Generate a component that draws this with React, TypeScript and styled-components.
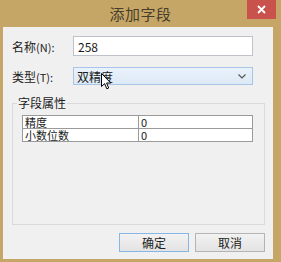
import styled, { createGlobalStyle } from 'styled-components';

const GlobalStyle = createGlobalStyle`
  html, body {
    margin: 0;
    padding: 0;
    background: #c6a666;
  }
  body {
    font-family: 'Noto Sans CJK SC', 'Noto Sans', sans-serif;
    font-size: 12px;
    color: #1a1a1a;
  }
`;

const Frame = styled.div`
  width: 281px;
  height: 262px;
  box-sizing: border-box;
  padding: 0 8px 3px 3px;
  background: #c6a666;
  display: flex;
  flex-direction: column;
`;

const TitleBar = styled.div`
  height: 27px;
  margin: 0 -8px 0 -3px;
  display: grid;
  grid-template-columns: 1fr auto 1fr;
  align-items: center;
`;

const Title = styled.div`
  grid-column: 2;
  font-size: 15px;
  color: #463d2b;
  line-height: 27px;
  letter-spacing: 0.5px;
`;

const CloseButton = styled.div`
  grid-column: 3;
  justify-self: end;
  align-self: start;
  margin-right: 5px;
  width: 29px;
  height: 19px;
  background: #c9534c;
  display: flex;
  align-items: center;
  justify-content: center;
`;

const Client = styled.div`
  flex: 1;
  background: #f0f0f0;
  padding: 9px 8px 0 9px;
  display: flex;
  flex-direction: column;
`;

const FieldRow = styled.div<{ $gap?: number }>`
  display: flex;
  align-items: center;
  margin-top: ${(p) => p.$gap ?? 0}px;
`;

const Label = styled.div`
  width: 61px;
  font-size: 12px;
  color: #222;

  small {
    font-size: 11px;
  }
`;

const TextInput = styled.div`
  width: 180px;
  height: 20px;
  box-sizing: border-box;
  border: 1px solid #bfc2c8;
  background: #fff;
  padding-left: 4px;
  display: flex;
  align-items: center;
  font-size: 12px;
`;

const Combo = styled.div`
  position: relative;
  width: 180px;
  height: 18px;
  box-sizing: border-box;
  border: 1px solid #a9c5e6;
  background: linear-gradient(#eaf2fb, #dde9f6);
  padding: 0 6px 0 3px;
  display: flex;
  align-items: center;
  justify-content: space-between;
  font-size: 12px;
`;

const Cursor = styled.svg`
  position: absolute;
  left: 27px;
  top: 5px;
`;

const Group = styled.fieldset`
  margin: 12px 0 0 0;
  height: 128px;
  box-sizing: border-box;
  border: 1px solid #dadada;
  padding: 6px 0 0 9px;
`;

const Legend = styled.legend`
  margin-left: -5px;
  padding: 0 1px;
  font-size: 12px;
  line-height: 12px;
  color: #222;
`;

const PropTable = styled.table`
  width: 231px;
  border-collapse: collapse;
  border: 1px solid #6e6e6e;
  background: #fff;
  font-size: 11px;
`;

const Cell = styled.td<{ $w?: number }>`
  height: 12px;
  padding: 0 2px;
  line-height: 12px;
  border: 1px solid #9a9a9a;
  width: ${(p) => (p.$w ? `${p.$w}px` : 'auto')};
  color: #1a1a1a;
  white-space: nowrap;
`;

const ButtonRow = styled.div`
  display: flex;
  justify-content: flex-end;
  gap: 6px;
  margin-top: 8px;
`;

const Button = styled.div<{ $default?: boolean }>`
  width: 70px;
  height: 19px;
  box-sizing: border-box;
  border: 1px solid ${(p) => (p.$default ? '#86b6e6' : '#b4b4b4')};
  background: linear-gradient(#f2f2f2, #e3e3e3);
  display: flex;
  align-items: center;
  justify-content: center;
  font-size: 12px;
  color: #222;
`;

const rows = [
  { name: '精度', value: '0' },
  { name: '小数位数', value: '0' },
];

export default function App() {
  return (
    <>
      <GlobalStyle />
      <Frame>
        <TitleBar>
          <Title>添加字段</Title>
          <CloseButton>
            <svg width="9" height="9" viewBox="0 0 9 9">
              <path d="M1 1L8 8M8 1L1 8" stroke="#fff" strokeWidth="1.8" />
            </svg>
          </CloseButton>
        </TitleBar>
        <Client>
          <FieldRow>
            <Label>
              名称<small>(N):</small>
            </Label>
            <TextInput>258</TextInput>
          </FieldRow>
          <FieldRow $gap={11}>
            <Label>
              类型<small>(T):</small>
            </Label>
            <Combo>
              <span>双精度</span>
              <svg width="8" height="5" viewBox="0 0 8 5">
                <path d="M0.5 0.5L4 4L7.5 0.5" fill="none" stroke="#555" strokeWidth="1.2" />
              </svg>
              <Cursor width="11" height="17" viewBox="0 0 11 17">
                <path
                  d="M0.5 0.5V13.5L3.6 10.6L5.8 15.8L7.7 15L5.6 10H9.8Z"
                  fill="#fff"
                  stroke="#000"
                  strokeWidth="1"
                  strokeLinejoin="round"
                />
              </Cursor>
            </Combo>
          </FieldRow>
          <Group>
            <Legend>字段属性</Legend>
            <PropTable>
              <tbody>
                {rows.map((r) => (
                  <tr key={r.name}>
                    <Cell $w={111}>{r.name}</Cell>
                    <Cell>{r.value}</Cell>
                  </tr>
                ))}
              </tbody>
            </PropTable>
          </Group>
          <ButtonRow>
            <Button $default>确定</Button>
            <Button>取消</Button>
          </ButtonRow>
        </Client>
      </Frame>
    </>
  );
}
